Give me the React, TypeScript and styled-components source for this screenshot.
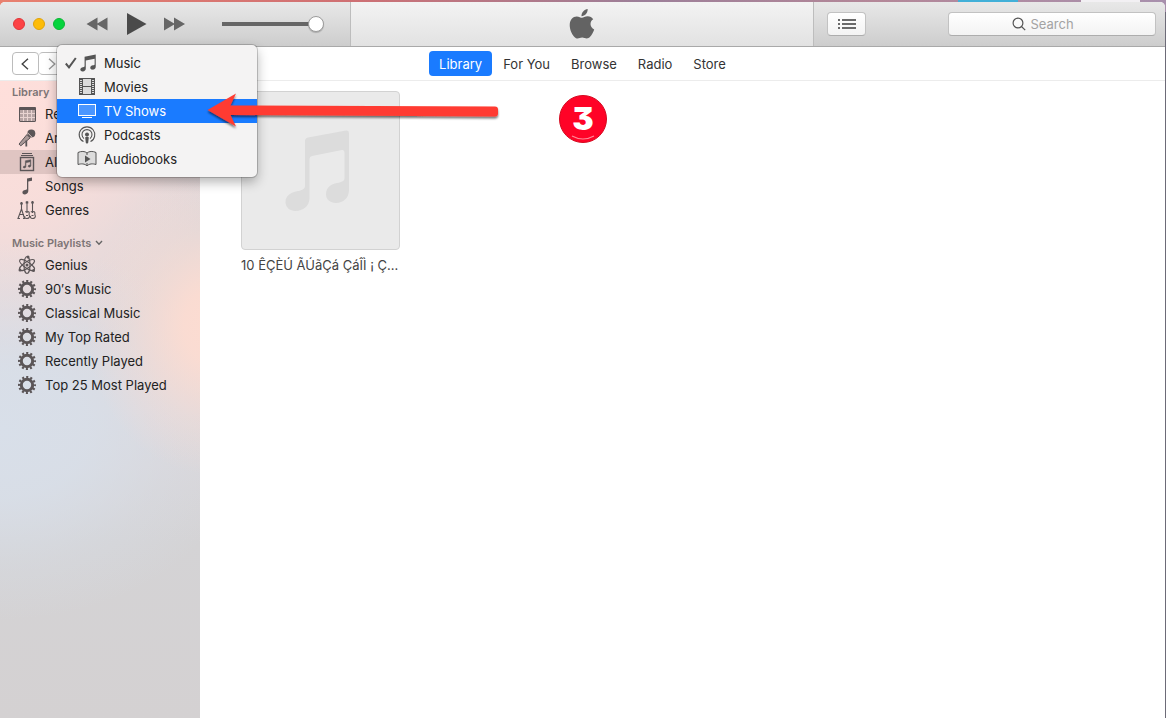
import React from "react";
import styled, { createGlobalStyle, css } from "styled-components";

const GlobalStyle = createGlobalStyle`
  *, *::before, *::after { box-sizing: border-box; }
  body {
    margin: 0;
    font-family: Inter, "Liberation Sans", sans-serif;
    font-size: 13px;
    line-height: 20px;
    color: #222;
  }
  button, input { font: inherit; color: inherit; }
  button { margin: 0; padding: 0; border: 0; background: none; }
  ul { margin: 0; padding: 0; list-style: none; }
  svg { display: block; flex: none; }
`;

const Desktop = styled.div`
  display: flex;
  flex-direction: column;
  min-height: 100vh;
  padding: 2px 1px 0 0;
  background:
    linear-gradient(#f2f0f3, #f2f0f3) calc(100% - 26px) 0 / 59px 2px no-repeat,
    linear-gradient(#42b0d8, #42b0d8) calc(100% - 148px) 0 / 60px 2px no-repeat,
    linear-gradient(90deg, #e8806f 0%, #cf7073 30%, #9c7f99 55%, #b48798 75%, #a890ad 100%) 0 0 / 100% 12px no-repeat,
    #6d6b78;
`;

const Window = styled.div`
  flex: 1;
  display: flex;
  flex-direction: column;
  overflow: hidden;
  border-radius: 5px 5px 0 0;
  background: #fff;
`;

const TitleBar = styled.header`
  display: grid;
  grid-template-columns: 350px minmax(0, 1fr) 351px;
  height: 45px;
  border-bottom: 1px solid #a9a9a9;
  background: linear-gradient(#e8e8e8, #cdcdcd);
`;

const Controls = styled.div`
  display: flex;
  align-items: center;
  padding-left: 13px;
`;

const Lights = styled.div`
  display: flex;
  gap: 8px;
  margin-right: 21px;
`;

const Light = styled.button<{ $fill: string; $edge: string }>`
  width: 12px;
  height: 12px;
  border-radius: 50%;
  border: 1px solid ${(p) => p.$edge};
  background: ${(p) => p.$fill};
`;

const Transport = styled.div`
  display: flex;
  align-items: center;
  gap: 17px;
  margin-right: 36px;
`;

const Volume = styled.input`
  appearance: none;
  width: 102px;
  height: 16px;
  margin: 0;
  background: linear-gradient(#666, #666) 0 50% / 96px 4px no-repeat;
  border-radius: 2px;
  &::-webkit-slider-thumb {
    appearance: none;
    width: 16px;
    height: 16px;
    border-radius: 50%;
    border: 1px solid #9b9b9b;
    background: #fff;
    box-shadow: 0 1px 1px rgba(0, 0, 0, 0.2);
  }
`;

const NowPlaying = styled.div`
  display: flex;
  align-items: center;
  justify-content: center;
  border: solid #bdbdbd;
  border-width: 0 1px;
  background: linear-gradient(#f3f3f3, #e2e2e2);
`;

const Tools = styled.div`
  display: flex;
  align-items: center;
  justify-content: space-between;
  padding: 0 9px 0 13px;
`;

const raised = css`
  border: 1px solid #c2c2c2;
  border-bottom-color: #adadad;
  border-radius: 4px;
  background: linear-gradient(#fff, #f3f3f3);
`;

const ListButton = styled.button`
  ${raised}
  display: flex;
  align-items: center;
  justify-content: center;
  width: 39px;
  height: 24px;
`;

const SearchBox = styled.label`
  ${raised}
  display: flex;
  align-items: center;
  justify-content: center;
  gap: 5px;
  width: 208px;
  height: 24px;
  padding-right: 16px;
`;

const SearchInput = styled.input`
  width: 46px;
  padding: 0;
  border: 0;
  outline: 0;
  background: none;
  &::placeholder { color: #a3a3a3; opacity: 1; }
`;

const NavBar = styled.div`
  position: relative;
  z-index: 1;
  display: flex;
  justify-content: center;
  align-items: center;
  height: 34px;
  border-bottom: 1px solid #ececec;
`;

const History = styled.div`
  position: absolute;
  left: 12px;
  top: 5px;
  display: flex;
`;

const HistoryButton = styled.button`
  display: flex;
  align-items: center;
  justify-content: center;
  width: 27px;
  height: 23px;
  padding-right: 2px;
  border: 1px solid #bcbcbc;
  border-radius: 4px;
  & + & { border-left-width: 0; padding-right: 0; }
`;

const Tabs = styled.nav`
  display: flex;
  gap: 1px;
`;

const Tab = styled.button<{ $active?: boolean }>`
  height: 25px;
  padding: 0 10px;
  border-radius: 4px;
  background: ${(p) => (p.$active ? "#1a7bff" : "none")};
  color: ${(p) => (p.$active ? "#fff" : "#333")};
`;

const Menu = styled.ul`
  position: absolute;
  left: 57px;
  top: -2px;
  width: 200px;
  padding: 6px 0;
  border-radius: 5px;
  background: #f4f3f3;
  box-shadow: 0 0 0 1px rgba(0, 0, 0, 0.18), 0 5px 12px rgba(0, 0, 0, 0.3);
`;

const MenuItem = styled.button<{ $active?: boolean }>`
  display: grid;
  grid-template-columns: 12px 20px 1fr;
  align-items: center;
  width: 100%;
  height: 24px;
  padding-left: 8px;
  text-align: left;
  background: ${(p) => (p.$active ? "#1a7bff" : "none")};
  color: ${(p) => (p.$active ? "#fff" : "#222")};
`;

const MenuLabel = styled.span`
  padding-left: 7px;
`;

const Body = styled.div`
  flex: 1;
  display: flex;
`;

const Sidebar = styled.aside`
  width: 200px;
  padding-top: 1px;
  background:
    radial-gradient(ellipse 130px 150px at 108% 245px, #fddcd1 0%, rgba(253, 220, 209, 0.9) 25%, rgba(253, 220, 209, 0.35) 65%, rgba(253, 220, 209, 0) 100%),
    radial-gradient(ellipse 250px 190px at 0 350px, #d8dfe9 0%, rgba(216, 223, 233, 0.85) 35%, rgba(216, 223, 233, 0.3) 70%, rgba(216, 223, 233, 0) 100%),
    radial-gradient(ellipse 230px 300px at 0 0, #ffdfdb 0%, rgba(255, 223, 219, 0.75) 45%, rgba(255, 223, 219, 0) 100%),
    linear-gradient(#ead9d8 0, #dcd7da 150px, #dcd8dc 330px, #d4d3d5 460px, #d4d1d2 100%);
`;

const SectionTitle = styled.h2`
  display: flex;
  align-items: center;
  gap: 4px;
  margin: 0;
  padding-left: 12px;
  font-size: 11px;
  line-height: 20px;
  font-weight: 600;
  color: #7d7576;
  ul + & { margin-top: 11px; }
`;

const SideRow = styled.button<{ $active?: boolean }>`
  display: flex;
  align-items: center;
  gap: 8px;
  width: 100%;
  height: 24px;
  padding-left: 17px;
  text-align: left;
  white-space: nowrap;
  background: ${(p) => (p.$active ? "rgba(90, 70, 70, 0.16)" : "none")};
`;

const Main = styled.main`
  flex: 1;
  padding: 10px 41px;
`;

const Album = styled.figure`
  width: 159px;
  margin: 0;
`;

const Cover = styled.div`
  display: flex;
  align-items: center;
  justify-content: center;
  height: 159px;
  border: 1px solid #d2d2d2;
  border-radius: 4px;
  background: #eaeaea;
`;

const Caption = styled.figcaption`
  margin-top: 5px;
  overflow: hidden;
  text-overflow: ellipsis;
  white-space: nowrap;
  color: #444;
`;

const Arrow = styled.svg`
  position: absolute;
  left: 206px;
  top: 44px;
`;

const Step = styled.div`
  position: absolute;
  left: 559px;
  top: 48px;
  width: 48px;
  height: 48px;
  border-radius: 50%;
  border: 1px solid #d50a20;
  background: #ff0327;
  color: #fff;
  font: 900 32px/46px Inter, sans-serif;
  font-feature-settings: "cv09";
  text-align: center;
`;

const Shine = styled.svg`
  position: absolute;
  left: 11px;
  top: 39px;
`;

const DARK = "#5b5557";

const NotePath = () => (
  <path d="M6 3 L18 0.5 V13.6 C18 15.4 16.6 16.6 14.8 16.8 C13.2 17 12.1 16.1 12.1 14.8 C12.1 13.2 13.4 12.5 15 12.2 C16.2 12 16.8 11.8 16.8 11 V5.1 L7.3 7.1 V15.6 C7.3 17.4 6 18.6 4.2 18.8 C2.5 19 1.4 18.1 1.4 16.8 C1.4 15.2 2.7 14.5 4.3 14.2 C5.5 14 6 13.8 6 13 Z" />
);

const icons: Record<string, () => React.ReactNode> = {
  music: () => (
    <g fill="#555" transform="translate(2 1) scale(.93)"><NotePath /></g>
  ),
  movies: () => (
    <g stroke="#555" fill="none">
      <rect x="2.500" y="1.500" width="15" height="16" fill="#dcdcdc" />
      <path d="M5.500 1.500v16M14.500 1.500v16M5.500 9.500h9" />
      <path d="M4 2v15M16 2v15" strokeWidth="2" strokeDasharray="1 1" />
    </g>
  ),
  tv: () => (
    <g stroke="#fff" fill="none">
      <rect x="1.500" y="3.500" width="17" height="11" fill="#4a96ff" />
      <path d="M5 16.500h10" />
    </g>
  ),
  podcasts: () => (
    <g stroke="#555" fill="none" strokeWidth="1.100">
      <path d="M6.500 16.600a7.800 7.800 0 1 1 7 0" />
      <path d="M7 13.600a5 5 0 1 1 6 0" />
      <circle cx="10" cy="9.400" r="2" fill="#555" stroke="none" />
      <path d="M8.200 12.600c0-1 3.600-1 3.600 0l-.600 5.200c-.100 1-2.300 1-2.400 0z" fill="#555" stroke="none" />
    </g>
  ),
  audiobooks: () => (
    <g stroke="#555" fill="#dcdcdc">
      <path d="M1 3.500C4 2 8 2 10 4C12 2 16 2 19 3.500V15.500C16 14.500 12 14.500 10 17C8 14.500 4 14.500 1 15.500Z" />
      <path d="M10 4v2M10 14v3" />
      <path d="M8 6.500L13.500 10L8 13.500Z" fill="#555" stroke="none" />
    </g>
  ),
  grid: () => (
    <g fill="none" stroke={DARK}>
      <rect x="2.500" y="3.500" width="16" height="14" rx="1" fill="#b5a3a3" />
      <path d="M2.500 4.500h16" strokeWidth="3" />
      <path d="M2.500 9.500h16M2.500 13.500h16M6.500 6v11.500M10.500 6v11.500M14.500 6v11.500" stroke="#e8d3d1" />
      <rect x="2.500" y="3.500" width="16" height="14" rx="1" />
    </g>
  ),
  mic: () => (
    <g fill={DARK}>
      <circle cx="14.300" cy="5.500" r="4" />
      <path d="M9.900 6.600L13.200 9.900L3.800 17.800L2 16.100Z" fill="#a89796" stroke={DARK} />
      <path d="M10.400 4.600L15.300 9.500" stroke="#f3dad7" strokeWidth="0.800" />
      <path d="M9.300 12.500V18.500" stroke={DARK} strokeWidth="1.800" />
    </g>
  ),
  album: () => (
    <g fill="none" stroke={DARK}>
      <path d="M5 1.500h10M4 3.500h12" />
      <rect x="3.500" y="5.500" width="13" height="13" strokeWidth="1.400" />
      <g transform="translate(5.600 7.400) scale(.46)" fill={DARK} stroke={DARK}><NotePath /></g>
    </g>
  ),
  song: () => (
    <path fill={DARK} d="M10 2.500L15 1.500V4.800L11.300 5.600V15C11.300 17 9.900 18.200 8 18.400C6.500 18.500 5.400 17.700 5.400 16.500C5.400 15 6.600 14.300 8.200 14C9.500 13.800 10 13.500 10 12.700Z" />
  ),
  guitars: () => (
    <g fill="none" stroke={DARK} strokeWidth="1.100">
      <path d="M4.500 2v8M10 1v12M15.500 1v12" />
      <path d="M3.200 3.500h2.600M8.700 2.500h2.600M14.200 2.500h2.600" strokeWidth="2" />
      <path d="M4.500 9L1 18.500H3M4.500 9L7.500 18.500H6M2.500 14.500h4.500" />
      <path d="M8.200 11.500c1.500 1 2.800-.500 3.800.500c.800 1-.500 2 .300 3.200c1 2.400-1 3.300-2.700 3.300c-1.700 0-2.300-1-1.700-2.500M9 15.500h2" />
      <path d="M13.800 11.500c1.500 1 2.800-.500 3.800.500c.800 1-.300 2 .500 3.200c1 2.400-1 3.300-2.700 3.300c-1.700 0-2.300-1-1.700-2.500M14.500 15.500h2" />
    </g>
  ),
  genius: () => (
    <g fill="none" stroke={DARK} strokeWidth="1.100">
      <ellipse cx="10" cy="10" rx="3" ry="8.500" />
      <ellipse cx="10" cy="10" rx="3" ry="8.800" transform="rotate(56 10 10)" />
      <ellipse cx="10" cy="10" rx="3" ry="8.800" transform="rotate(-56 10 10)" />
      <g fill={DARK} stroke="none">
        <circle cx="10" cy="10" r="1.500" /><circle cx="11" cy="2" r="1.500" />
        <circle cx="3" cy="15" r="1.500" /><circle cx="16.500" cy="15.500" r="1.500" />
      </g>
    </g>
  ),
  gear: () => (
    <g fill="none" stroke={DARK}>
      <circle cx="10" cy="10" r="5.700" strokeWidth="3" />
      <circle cx="10" cy="10" r="7.900" strokeWidth="2.200" strokeDasharray="2.068 2.068" strokeDashoffset="1.034" />
    </g>
  ),
};

const Icon = ({ name }: { name: string }) => (
  <svg width="20" height="20" viewBox="0 0 20 20" aria-hidden="true">{icons[name]()}</svg>
);

const Skip = ({ flip }: { flip?: boolean }) => (
  <svg width="22" height="14" viewBox="0 0 22 14" fill="#666">
    <path d={flip ? "M0 0.500L11 7L0 13.500ZM10 0.500L21 7L10 13.500Z" : "M21.500 0.500L10.500 7L21.500 13.500ZM11.500 0.500L0.500 7L11.500 13.500Z"} />
  </svg>
);

const tabs = ["Library", "For You", "Browse", "Radio", "Store"];
const menu = [
  ["music", "Music"],
  ["movies", "Movies"],
  ["tv", "TV Shows"],
  ["podcasts", "Podcasts"],
  ["audiobooks", "Audiobooks"],
];
const library = [
  ["grid", "Recently Added"],
  ["mic", "Artists"],
  ["album", "Albums"],
  ["song", "Songs"],
  ["guitars", "Genres"],
];
const playlists = [
  ["genius", "Genius"],
  ["gear", "90′s Music"],
  ["gear", "Classical Music"],
  ["gear", "My Top Rated"],
  ["gear", "Recently Played"],
  ["gear", "Top 25 Most Played"],
];

const SideList = ({ items, active }: { items: string[][]; active?: string }) => (
  <ul>
    {items.map(([icon, label]) => (
      <li key={label}>
        <SideRow $active={label === active}><Icon name={icon} />{label}</SideRow>
      </li>
    ))}
  </ul>
);

export default function App() {
  return (
    <Desktop>
      <GlobalStyle />
      <Window>
        <TitleBar>
          <Controls>
            <Lights>
              <Light aria-label="Close" $fill="#fc4345" $edge="#e03538" />
              <Light aria-label="Minimize" $fill="#fdbc08" $edge="#e0a30a" />
              <Light aria-label="Zoom" $fill="#06d43e" $edge="#0cb634" />
            </Lights>
            <Transport>
              <button aria-label="Previous"><Skip /></button>
              <button aria-label="Play">
                <svg width="22" height="22" viewBox="0 0 22 22" fill="#4a4a4a"><path d="M2 0L21.500 11L2 22Z" /></svg>
              </button>
              <button aria-label="Next"><Skip flip /></button>
            </Transport>
            <Volume type="range" aria-label="Volume" min={0} max={100} defaultValue={100} />
          </Controls>
          <NowPlaying>
            <svg width="26" height="32" viewBox="0 0 26 32" fill="#636363" aria-label="Apple">
              <path d="M18.700 1C18.900 4.700 15.800 8.200 12.500 8.200C12.100 4.700 15.300 1.400 18.700 1Z" />
              <path d="M13 9.800C14.300 9.800 16 8.300 18.700 8.300C21 8.300 23 9.500 24.200 11.300C20.200 13.700 20.900 19.600 25.200 21.400C24.400 23.900 22 28.500 19.500 30C17.200 31.200 15.600 29.600 13.200 29.600C10.800 29.600 9.300 31.200 7 30.200C3.600 28.300 0.700 21.800 0.700 17.200C0.700 11.600 4 8.400 7.700 8.400C10 8.400 11.800 9.800 13 9.800Z" />
            </svg>
          </NowPlaying>
          <Tools>
            <ListButton aria-label="Up next">
              <svg width="18" height="12" viewBox="0 0 18 12" fill="#6a6a6a">
                <path d="M0 1h2v2H0zM4 1h14v2H4zM0 5h2v2H0zM4 5h14v2H4zM0 9h2v2H0zM4 9h14v2H4z" />
              </svg>
            </ListButton>
            <SearchBox>
              <svg width="14" height="14" viewBox="0 0 14 14" fill="none" stroke="#555" strokeWidth="1.200">
                <circle cx="6" cy="6" r="4.900" /><path d="M9.500 9.500L13.200 13.200" />
              </svg>
              <SearchInput type="text" placeholder="Search" aria-label="Search" />
            </SearchBox>
          </Tools>
        </TitleBar>

        <NavBar>
          <History>
            <HistoryButton aria-label="Back">
              <svg width="8" height="12" viewBox="0 0 8 12" fill="none" stroke="#444" strokeWidth="1.400"><path d="M7 0.800L1.200 6L7 11.200" /></svg>
            </HistoryButton>
            <HistoryButton aria-label="Forward">
              <svg width="8" height="12" viewBox="0 0 8 12" fill="none" stroke="#999" strokeWidth="1.400"><path d="M1 0.800L6.800 6L1 11.200" /></svg>
            </HistoryButton>
          </History>
          <Tabs>
            {tabs.map((t) => <Tab key={t} $active={t === "Library"}>{t}</Tab>)}
          </Tabs>
          <Menu>
            {menu.map(([icon, label]) => (
              <li key={label}>
                <MenuItem $active={label === "TV Shows"}>
                  <svg width="12" height="12" viewBox="0 0 12 12" fill="none" stroke="#555" strokeWidth="2">
                    {label === "Music" && <path d="M0.800 6.500L4 10.300L10.800 1" />}
                  </svg>
                  <Icon name={icon} />
                  <MenuLabel>{label}</MenuLabel>
                </MenuItem>
              </li>
            ))}
          </Menu>
          <Arrow width="296" height="44" viewBox="0 0 296 44">
            <defs>
              <filter id="arrow-shadow" x="-5%" y="-20%" width="110%" height="150%">
                <feDropShadow dx="0" dy="2" stdDeviation="1.200" floodColor="#000" floodOpacity="0.550" />
              </filter>
            </defs>
            <path filter="url(#arrow-shadow)" fill="#ff3b30" d="M1.500 19L30 2.500L24.500 14.500L289 15.500Q292 15.500 292 18.500V22.500Q292 25.500 289 25.500L24.500 24L30 35.500Z" />
          </Arrow>
          <Step>
            3
            <Shine width="24" height="6" viewBox="0 0 24 6" fill="none" stroke="#ff8a98" strokeWidth="1.200"><path d="M1 1Q12 7 23 1" /></Shine>
          </Step>
        </NavBar>

        <Body>
          <Sidebar>
            <SectionTitle>Library</SectionTitle>
            <SideList items={library} active="Albums" />
            <SectionTitle>
              Music Playlists
              <svg width="8" height="6" viewBox="0 0 8 6" fill="none" stroke="#666" strokeWidth="1.400"><path d="M1 1L4 4.200L7 1" /></svg>
            </SectionTitle>
            <SideList items={playlists} />
          </Sidebar>
          <Main>
            <Album>
              <Cover>
                <svg width="74" height="84" viewBox="0 0 74 84" fill="#dcdcdc">
                  <path d="M21 12Q21 9 24 8.500L62 1.500Q65 1 65 4V61C65 69 59 74 52 74C46 74 42 70.500 42 65C42 58.500 47 55 53 54C58 53.200 60.500 52 60.500 49V23.500Q60.500 20.500 58 21L28 27Q25.500 27.500 25.500 30V69C25.500 77 19 82 11.500 82C5.500 82 1.500 78 1.500 73C1.500 67 6.500 63.500 12 62.500C18 61.500 21 60 21 57Z" />
                </svg>
              </Cover>
              <Caption>10 ÊÇÈÚ ÃÚãÇá ÇáÎÌ ¡ Ç...</Caption>
            </Album>
          </Main>
        </Body>
      </Window>
    </Desktop>
  );
}
